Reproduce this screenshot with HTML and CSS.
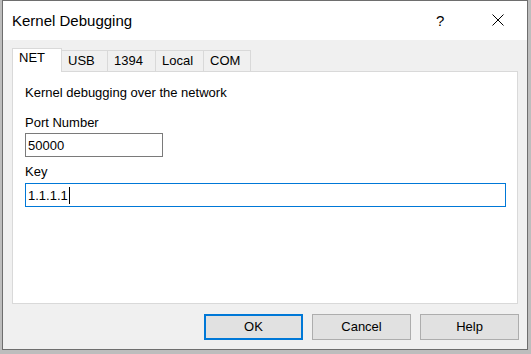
FILE: index.html
```html
<!DOCTYPE html>
<html>
<head>
<meta charset="utf-8">
<link rel="stylesheet" href="styles.css">
</head>
<body>
<div class="window">
  <div class="titlebar">
    <span class="title">Kernel Debugging</span>
    <span class="help">?</span>
    <svg class="close" width="12" height="12" viewBox="0 0 12 12"><path d="M0.5 0.5 L11.5 11.5 M11.5 0.5 L0.5 11.5" stroke="#000" stroke-width="1" fill="none"/></svg>
  </div>
  <div class="body">
    <div class="tabs">
      <div class="tab selected w50">NET</div>
      <div class="tab w46">USB</div>
      <div class="tab w48">1394</div>
      <div class="tab w48">Local</div>
      <div class="tab w47">COM</div>
    </div>
    <div class="panel">
      <div class="line intro">Kernel debugging over the network</div>
      <div class="line label">Port Number</div>
      <div class="field port">50000</div>
      <div class="line label key">Key</div>
      <div class="field focused">1.1.1.1<span class="caret"></span></div>
    </div>
    <div class="buttons">
      <div class="btn default">OK</div>
      <div class="btn">Cancel</div>
      <div class="btn">Help</div>
    </div>
  </div>
</div>
</body>
</html>
```
FILE: styles.css
```css
html, body {
  margin: 0;
  padding: 0;
}
body {
  background: #bdbdbd;
  width: 531px;
  height: 354px;
  overflow: hidden;
  font-family: "Liberation Sans", Arial, sans-serif;
  font-size: 13px;
  color: #000;
}
.window {
  margin-left: 2px;
  width: 524px;
  height: 348px;
  border: 1px solid #6e6e6e;
  display: flex;
  flex-direction: column;
  background: #f0f0f0;
}
.titlebar {
  height: 39px;
  background: #fff;
  display: flex;
  align-items: center;
  padding-left: 9px;
  box-sizing: border-box;
}
.title {
  font-size: 15px;
  flex: 1;
  padding-bottom: 1px;
}
.help {
  font-size: 15px;
  width: 12px;
  margin-right: 44px;
  padding-bottom: 1px;
}
.close {
  margin-right: 23px;
  margin-top: -1px;
}
.body {
  flex: 1;
  padding: 8px 9px 0 9px;
  display: flex;
  flex-direction: column;
}
.tabs {
  height: 23px;
  display: flex;
  align-items: flex-end;
}
.tab {
  height: 21px;
  box-sizing: border-box;
  border-top: 1px solid #d9d9d9;
  border-right: 1px solid #d9d9d9;
  background: #f0f0f0;
  line-height: 19px;
  padding-left: 6px;
}
.tab.selected {
  height: 24px;
  margin-bottom: -1px;
  border-left: 1px solid #d9d9d9;
  background: #fff;
  position: relative;
  z-index: 1;
  line-height: 18px;
}
.w50 { width: 50px; }
.w46 { width: 46px; }
.w48 { width: 48px; }
.w47 { width: 47px; }
.panel {
  height: 233px;
  box-sizing: border-box;
  border: 1px solid #d9d9d9;
  background: #fff;
  padding: 13px 12px 0 12px;
  display: flex;
  flex-direction: column;
  align-items: flex-start;
}
.line {
  line-height: 15px;
  height: 15px;
}
.label {
  margin-top: 15px;
  margin-bottom: 3px;
}
.label.key {
  margin-top: 7px;
  margin-bottom: 4px;
}
.field {
  height: 24px;
  box-sizing: border-box;
  border: 1px solid #7a7a7a;
  line-height: 21px;
  padding-left: 2px;
  display: flex;
  align-items: center;
}
.field.port {
  width: 138px;
}
.field.focused {
  width: 481px;
  border-color: #0078d7;
}
.caret {
  display: inline-block;
  width: 1px;
  height: 17px;
  background: #000;
  margin-left: 1px;
}
.buttons {
  display: flex;
  justify-content: flex-end;
  gap: 9px;
  margin-top: 10px;
  margin-right: -1px;
}
.btn {
  width: 99px;
  height: 26px;
  box-sizing: border-box;
  border: 1px solid #adadad;
  background: #e1e1e1;
  text-align: center;
  line-height: 24px;
}
.btn.default {
  border: 2px solid #0078d7;
  line-height: 22px;
}
```
